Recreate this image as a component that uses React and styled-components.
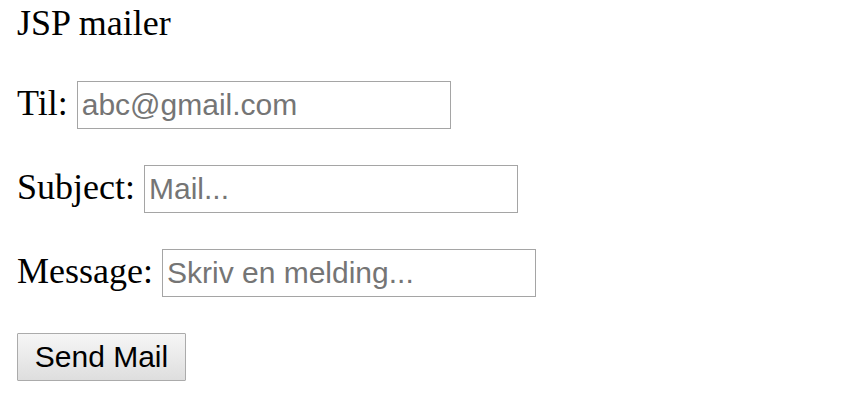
import React from "react";
import styled, { createGlobalStyle } from "styled-components";

const Global = createGlobalStyle`
  html, body { margin: 0; padding: 0; background: #fff; }
  body { font-family: "Liberation Serif", "Times New Roman", serif; color: #000; }
`;

const Page = styled.form`
  display: flex;
  flex-direction: column;
  align-items: flex-start;
  padding: 0 17px;
`;

const Title = styled.div`
  font-size: 36px;
  line-height: 40px;
  margin-top: 3px;
  margin-bottom: 38px;
`;

const Row = styled.div`
  display: flex;
  align-items: baseline;
  gap: 9px;
  margin-bottom: 36px;
`;

const Label = styled.label`
  font-size: 36px;
  line-height: 40px;
`;

const Input = styled.input`
  box-sizing: border-box;
  width: 374px;
  height: 48px;
  border: 1px solid #a5a5a5;
  padding: 0 4px;
  margin: 0;
  font-family: "Liberation Sans", Arial, sans-serif;
  font-size: 30px;
  color: #000;
  background: #fff;
  outline: none;
  &::placeholder { color: #757575; opacity: 1; }
`;

const Button = styled.button`
  box-sizing: border-box;
  width: 169px;
  height: 48px;
  padding: 0;
  margin: 0;
  border: 1px solid #ababab;
  border-radius: 1px;
  background: linear-gradient(#f6f6f6, #dedede);
  font-family: "Liberation Sans", Arial, sans-serif;
  font-size: 30px;
  color: #000;
`;

export default function App() {
  return (
    <>
      <Global />
      <Page onSubmit={(e) => e.preventDefault()}>
        <Title>JSP mailer</Title>
        <Row>
          <Label htmlFor="to">Til:</Label>
          <Input id="to" type="text" placeholder="abc@gmail.com" />
        </Row>
        <Row>
          <Label htmlFor="subject">Subject:</Label>
          <Input id="subject" type="text" placeholder="Mail..." />
        </Row>
        <Row>
          <Label htmlFor="message">Message:</Label>
          <Input id="message" type="text" placeholder="Skriv en melding..." />
        </Row>
        <Button type="submit">Send Mail</Button>
      </Page>
    </>
  );
}
